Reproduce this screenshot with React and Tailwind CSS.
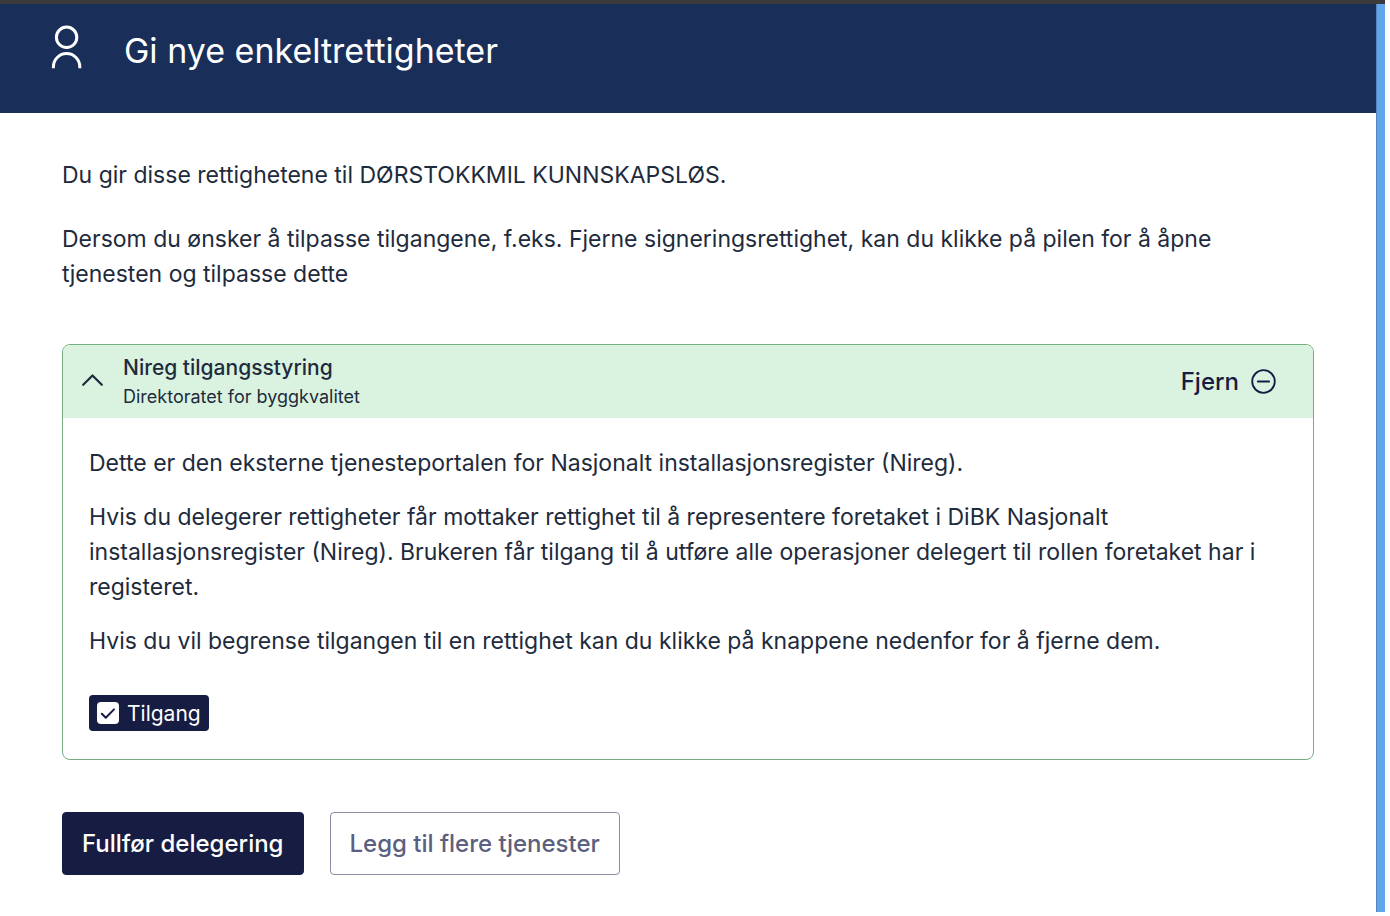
import React, { useState } from 'react';

const paragraphs = [
    'Dette er den eksterne tjenesteportalen for Nasjonalt installasjonsregister (Nireg).',
    'Hvis du delegerer rettigheter får mottaker rettighet til å representere foretaket i DiBK Nasjonalt installasjonsregister (Nireg). Brukeren får tilgang til å utføre alle operasjoner delegert til rollen foretaket har i registeret.',
    'Hvis du vil begrense tilgangen til en rettighet kan du klikke på knappene nedenfor for å fjerne dem.',
];

const PersonIcon = () => (
    <svg className="h-11 w-8 shrink-0" viewBox="0 0 32 44" fill="none" stroke="currentColor" strokeWidth="3" strokeLinecap="butt" aria-hidden="true">
        <circle cx="15.6" cy="12.3" r="10.2" />
        <path d="M2.4 43.3v-1.5a13.2 13.2 0 0 1 26.4 0v1.5" />
    </svg>
);

const ChevronUpIcon = () => (
    <svg className="mb-1 h-3 w-[21px]" viewBox="0 0 21 12" fill="none" stroke="currentColor" strokeWidth="2.2" strokeLinecap="round" strokeLinejoin="round" aria-hidden="true">
        <path d="M1.2 10.8L10.5 1.5l9.3 9.3" />
    </svg>
);

const MinusCircleIcon = () => (
    <svg className="size-[25px]" viewBox="0 0 25 25" fill="none" stroke="currentColor" strokeWidth="1.8" strokeLinecap="round" aria-hidden="true">
        <circle cx="12.5" cy="12.5" r="11.3" />
        <path d="M6.8 12.5h11.4" />
    </svg>
);

const ServiceCard = () => {
    const [isOpen, setIsOpen] = useState(true);
    const [hasAccess, setHasAccess] = useState(true);

    return (
        <section className="overflow-hidden rounded-lg border border-[#77ad7e]">
            <div className="flex items-center justify-between bg-[#daf3e0] pr-[37px] pl-[19px]">
                <button
                    type="button"
                    aria-expanded={isOpen}
                    onClick={() => setIsOpen(!isOpen)}
                    className="flex items-center gap-5 pt-2 pb-[7px] text-left"
                >
                    <ChevronUpIcon />
                    <span>
                        <span className="block text-[21px] leading-[29px] font-medium">Nireg tilgangsstyring</span>
                        <span className="block text-lg leading-[29px]">Direktoratet for byggkvalitet</span>
                    </span>
                </button>
                <button type="button" className="flex items-center gap-3 text-2xl font-medium text-[#171c42]">
                    Fjern
                    <MinusCircleIcon />
                </button>
            </div>
            {isOpen && (
                <div className="px-[26px] py-7">
                    <div className="space-y-[19px]">
                        {paragraphs.map(text => (
                            <p key={text}>{text}</p>
                        ))}
                    </div>
                    <label className="mt-9 flex h-9 w-fit items-center gap-2 rounded bg-[#171c42] px-2 text-[21px] text-white">
                        <span className="grid">
                            <input
                                type="checkbox"
                                checked={hasAccess}
                                onChange={() => setHasAccess(!hasAccess)}
                                className="peer col-start-1 row-start-1 size-[22px] appearance-none rounded-sm bg-white"
                            />
                            <svg className="pointer-events-none invisible col-start-1 row-start-1 size-[22px] text-[#171c42] peer-checked:visible" viewBox="0 0 22 22" fill="none" stroke="currentColor" strokeWidth="2" strokeLinecap="round" strokeLinejoin="round" aria-hidden="true">
                                <path d="M4.8 11.8l4 4 8.2-8.4" />
                            </svg>
                        </span>
                        Tilgang
                    </label>
                </div>
            )}
        </section>
    );
};

const App = () => {
    return (
        <div className="bg-white pr-[5px] font-['Inter',sans-serif] text-[23px] leading-[35px] text-[#1e2b3c]">
            <div className="h-1 bg-[#3b3b3b]" />
            <div className="flex">
                <div className="min-w-0 flex-1">
                    <header className="flex h-[109px] items-start gap-[41px] bg-[#192f5a] px-[51px] pt-[21px] text-white">
                        <PersonIcon />
                        <h1 className="text-[34px] leading-[51px]">Gi nye enkeltrettigheter</h1>
                    </header>
                    <main className="px-[62px] pt-[45px] pb-[37px]">
                        <p>Du gir disse rettighetene til DØRSTOKKMIL KUNNSKAPSLØS.</p>
                        <p className="mt-[29px] mb-[52px]">
                            Dersom du ønsker å tilpasse tilgangene, f.eks. Fjerne signeringsrettighet, kan du klikke på pilen for å åpne tjenesten og tilpasse dette
                        </p>
                        <ServiceCard />
                        <div className="mt-[52px] flex gap-[26px] text-2xl font-medium">
                            <button type="button" className="h-[63px] rounded border border-[#171c42] bg-[#171c42] px-[19px] text-white">
                                Fullfør delegering
                            </button>
                            <button type="button" className="h-[63px] rounded border border-[#8b8da5] bg-white px-[19px] text-[#5b6080]">
                                Legg til flere tjenester
                            </button>
                        </div>
                    </main>
                </div>
                <div className="w-[9px] border-l border-[#5585bd] bg-[#62a5eb]" />
            </div>
        </div>
    );
};

export default App;
